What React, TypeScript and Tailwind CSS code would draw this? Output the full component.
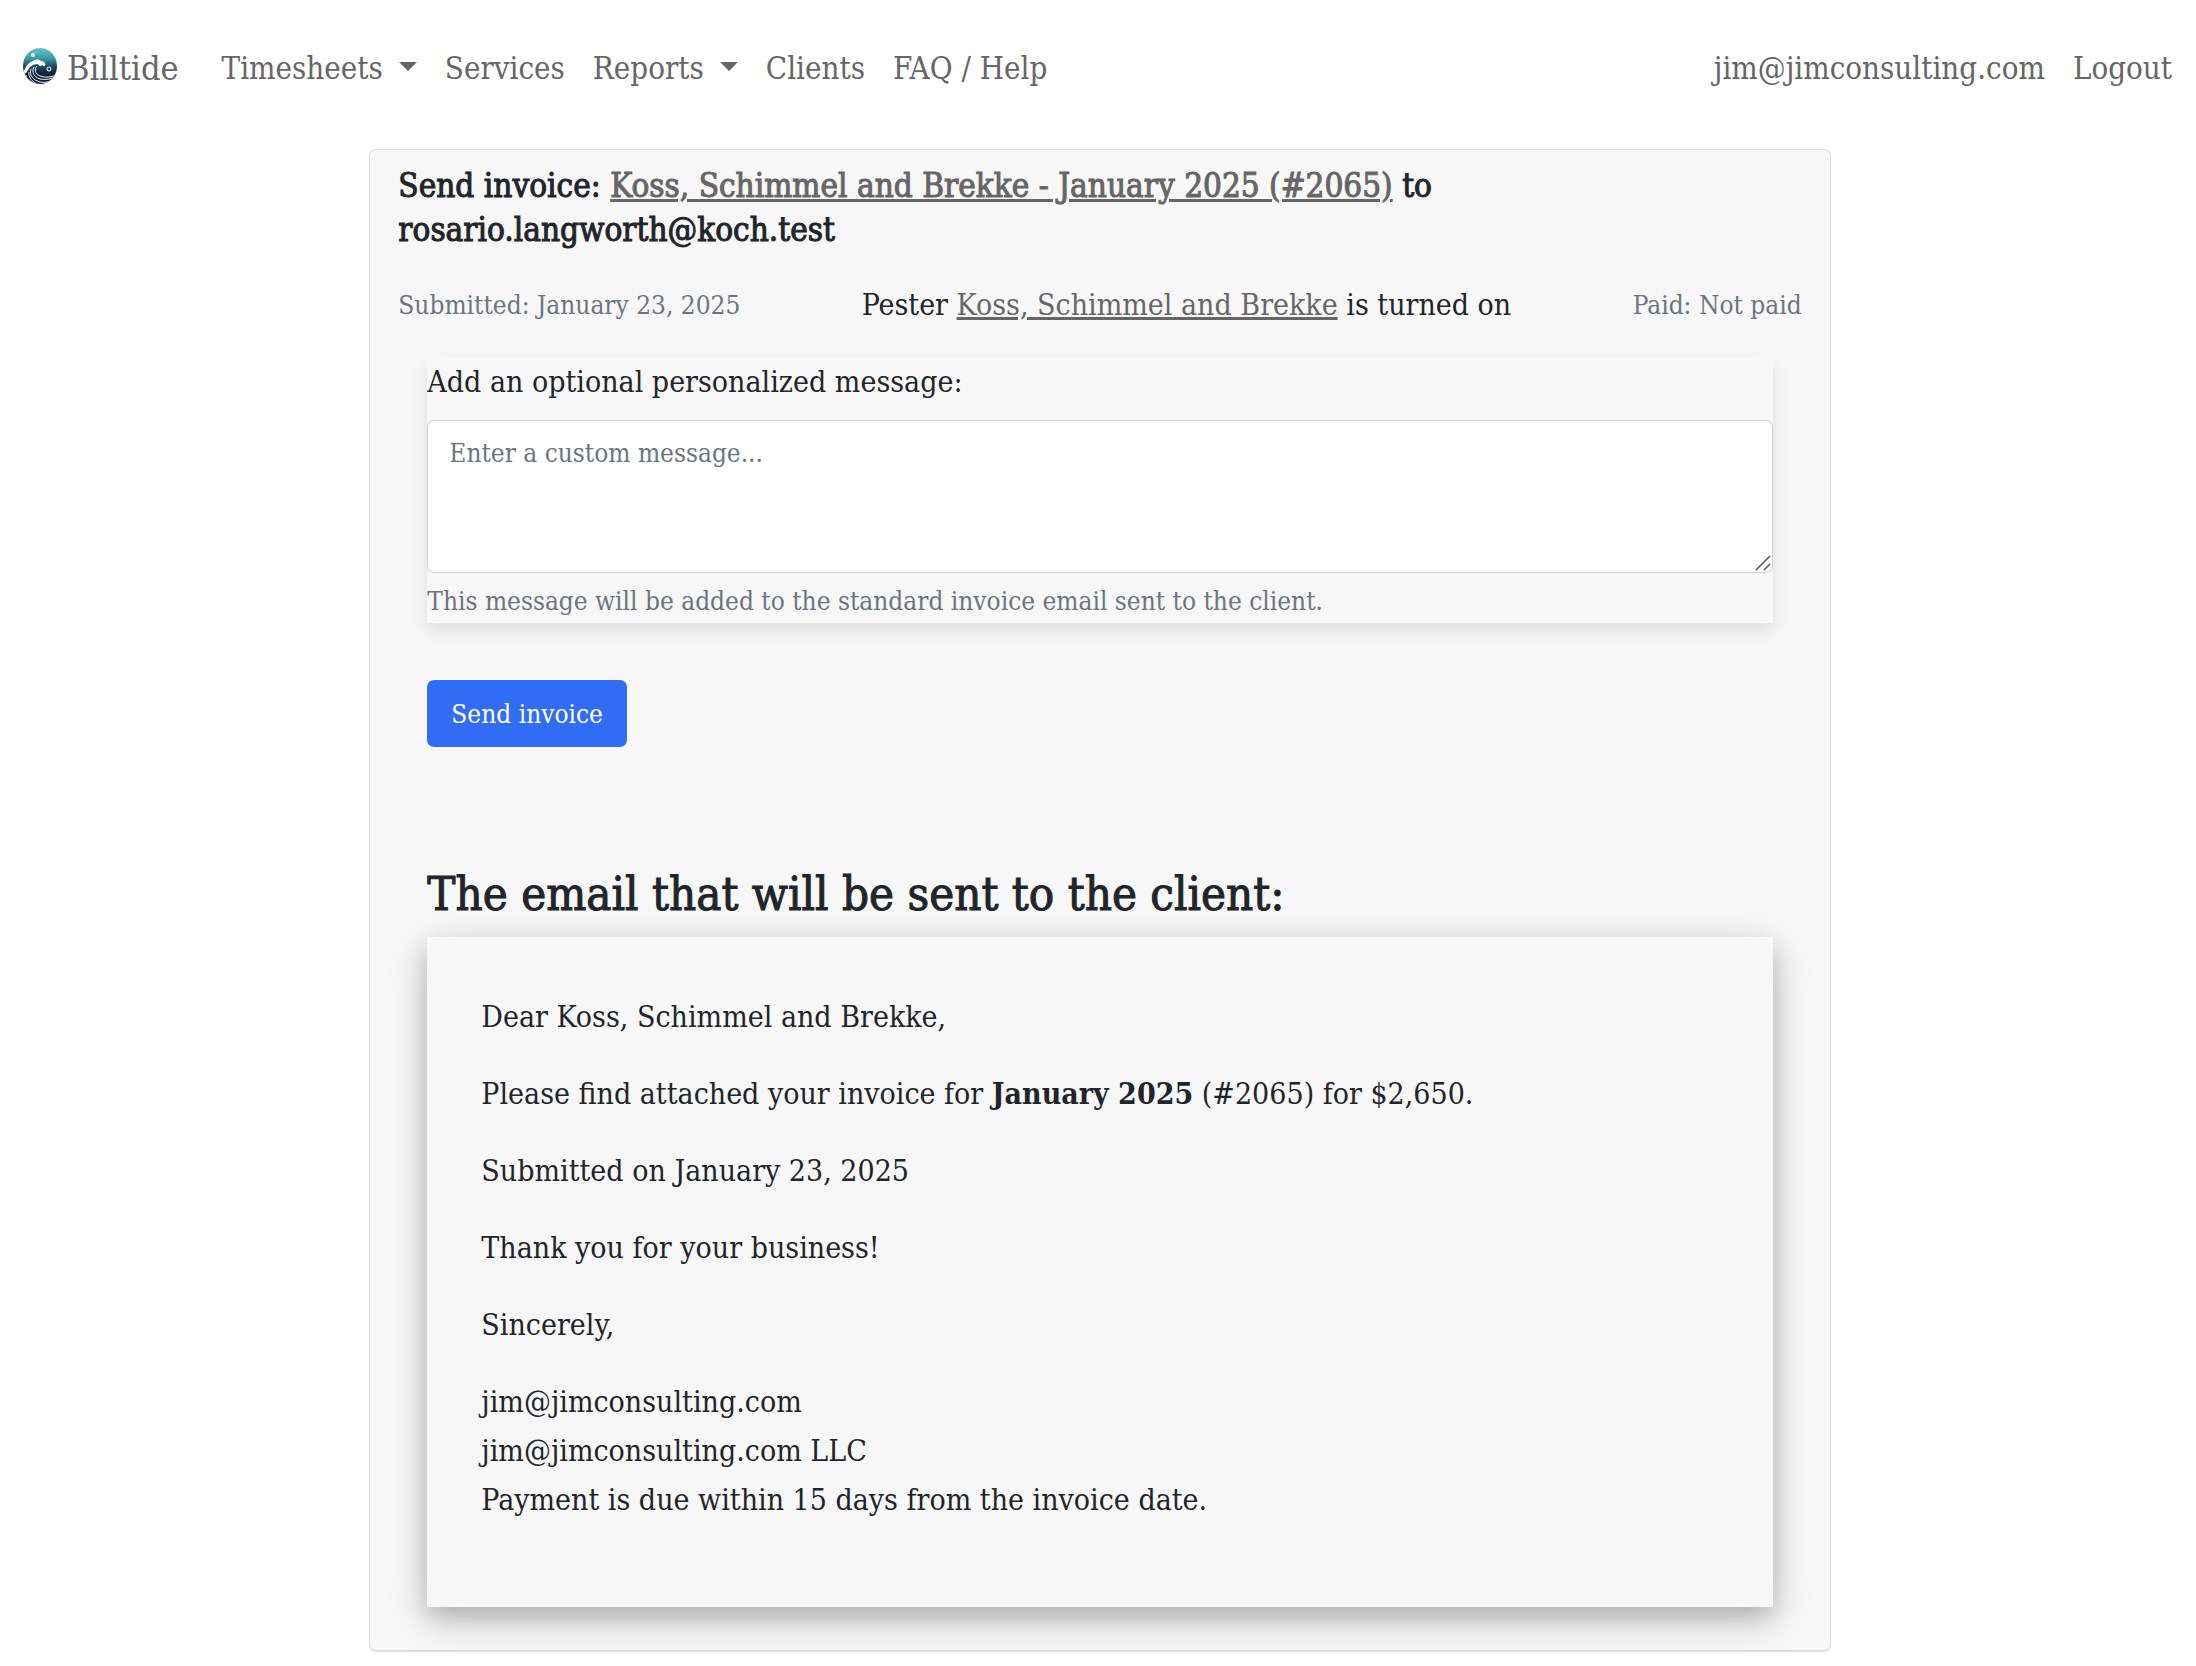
import type { ReactNode } from "react"

const navLink = "px-[14px] hover:text-[#333333]"

function Caret() {
  return (
    <svg className="mb-1" width="18" height="9" viewBox="0 0 18 9" aria-hidden="true">
      <path d="M0 0h18L9 9z" fill="currentColor" />
    </svg>
  )
}

function Logo() {
  return (
    <svg className="mb-1" width="36" height="38" viewBox="0 0 36 38" aria-hidden="true">
      <defs>
        <linearGradient id="sky" x1="0" y1="0" x2="0" y2="1">
          <stop offset="0" stopColor="#64cccc" />
          <stop offset="0.3" stopColor="#3a9aa3" />
          <stop offset="0.5" stopColor="#1d4d63" />
          <stop offset="0.7" stopColor="#10203a" />
        </linearGradient>
        <clipPath id="disc">
          <ellipse cx="18" cy="19" rx="17" ry="18" />
        </clipPath>
      </defs>
      <g clipPath="url(#disc)">
        <path fill="url(#sky)" d="M0 0h36v38H0z" />
        <path
          fill="#ffffff"
          d="M0 26c3-2 4-10 11-12 2-2 6-2 8 0 3 0 5 2 4 5-1 1-2 0-3-1-1 2-3 1-4-1-5 0-9 3-11 8-1 1-3 3-5 4z"
        />
        <path
          fill="none"
          stroke="#f2f6f8"
          strokeWidth="1"
          d="M15 19c-3 3-2 8 3 10 6 2 12 1 17-1M12 20c-3 5 0 10 6 12 6 1 11 0 16-2M9 22c-2 6 2 11 9 13 5 1 9 0 13-2M7 25c-1 5 3 10 10 13M4 28c0 4 4 8 8 10M2 30c1 3 3 5 6 8"
        />
        <circle cx="11" cy="8" r="2" fill="#ffffff" />
        <circle cx="27" cy="22" r="2" fill="none" stroke="#ffffff" strokeWidth="1" />
      </g>
    </svg>
  )
}

function TextLink({ children }: { children: ReactNode }) {
  return (
    <a href="#client" className="text-[#666666] underline decoration-[3px] underline-offset-2">
      {children}
    </a>
  )
}

function Navbar() {
  return (
    <nav className="flex items-center justify-between pt-10 pr-6 pb-[53px] pl-[22px] text-[31px] leading-[56px] text-[#666666]">
      <div className="flex items-center">
        <a href="#home" className="mr-[29px] flex items-center gap-[9px] text-[34px]">
          <Logo />
          Billtide
        </a>
        <button className={`${navLink} flex items-center gap-4`}>
          Timesheets
          <Caret />
        </button>
        <a href="#services" className={navLink}>Services</a>
        <button className={`${navLink} flex items-center gap-4`}>
          Reports
          <Caret />
        </button>
        <a href="#clients" className={navLink}>Clients</a>
        <a href="#faq" className={navLink}>FAQ / Help</a>
      </div>
      <div className="flex items-center gap-7">
        <a href="#account">jim@jimconsulting.com</a>
        <a href="#logout">Logout</a>
      </div>
    </nav>
  )
}

function MessageField() {
  return (
    <div className="bg-[#f7f7f7] shadow-[0_8px_16px_rgba(0,0,0,0.1)]">
      <label htmlFor="message" className="block pb-[14px] leading-[49px]">
        Add an optional personalized message:
      </label>
      <div className="relative">
        <textarea
          id="message"
          placeholder="Enter a custom message..."
          className="block h-[153px] w-full resize-none rounded-[7px] border border-[#ced4da] bg-white px-[21px] py-[11px] text-[26px] leading-[43px] placeholder:text-[#6c757d]"
        />
        {/* resize grip */}
        <svg
          className="pointer-events-none absolute right-[2px] bottom-[2px]"
          width="16"
          height="16"
          viewBox="0 0 16 16"
          aria-hidden="true"
        >
          <path d="M1 15L15 1M9 15l6-6" stroke="#555555" strokeWidth="1.5" fill="none" />
        </svg>
      </div>
      <p className="pt-[7px] text-[26px] leading-[43px] text-[#6c757d]">
        This message will be added to the standard invoice email sent to the client.
      </p>
    </div>
  )
}

function EmailPreview() {
  return (
    <div className="space-y-7 bg-[#f7f7f7] px-[54px] pt-[55px] pb-[83px] leading-[49px] shadow-[0_10px_22px_rgba(0,0,0,0.18),0_12px_40px_rgba(0,0,0,0.17)]">
      <p>Dear Koss, Schimmel and Brekke,</p>
      <p>
        Please find attached your invoice for <strong>January 2025</strong> (#2065) for $2,650.
      </p>
      <p>Submitted on January 23, 2025</p>
      <p>Thank you for your business!</p>
      <p>Sincerely,</p>
      <p>
        jim@jimconsulting.com
        <br />
        jim@jimconsulting.com LLC
        <br />
        Payment is due within 15 days from the invoice date.
      </p>
    </div>
  )
}

export default function App() {
  return (
    <div className="bg-white font-['DejaVu_Serif_Condensed','DejaVu_Serif',serif] text-[30px] leading-[48px] text-[#212529]">
      <Navbar />
      <main className="flex justify-center pb-[14px] pl-1">
        <section className="w-2/3 rounded-[7px] border border-b-2 border-[#dcdcdc] bg-[#f7f7f7] px-7 pt-[14px] pb-[43px]">
          <h1 className="text-[33px] leading-[44px] font-medium [-webkit-text-stroke:1px]">
            Send invoice: <TextLink>Koss, Schimmel and Brekke - January 2025 (#2065)</TextLink> to
            <br />
            rosario.langworth@koch.test
          </h1>
          <div className="mt-[29px] flex items-center justify-between">
            <span className="text-[26px] text-[#6c757d]">Submitted: January 23, 2025</span>
            <span>
              Pester <TextLink>Koss, Schimmel and Brekke</TextLink> is turned on
            </span>
            <span className="text-[26px] text-[#6c757d]">Paid: Not paid</span>
          </div>
          <form className="mt-7 px-[29px]" onSubmit={(e) => e.preventDefault()}>
            <MessageField />
            <button
              type="submit"
              className="mt-[57px] block h-[67px] rounded-[7px] bg-[#316cf4] px-6 text-[26px] text-white"
            >
              Send invoice
            </button>
          </form>
          <div className="mt-[118px] px-[29px]">
            <h2 className="mb-[14px] text-[47px] leading-[58px] font-medium [-webkit-text-stroke:1px]">
              The email that will be sent to the client:
            </h2>
            <EmailPreview />
          </div>
        </section>
      </main>
    </div>
  )
}
